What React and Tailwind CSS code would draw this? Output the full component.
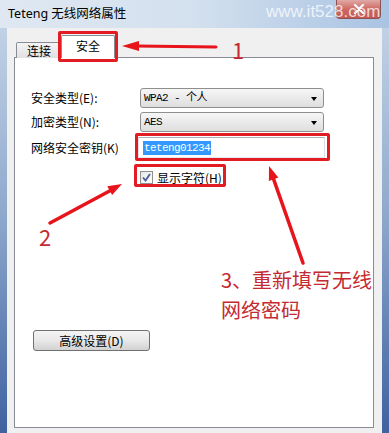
import React from "react";

const cjk = { fontFamily: '"Noto Sans CJK SC", "Noto Sans", sans-serif' };
const mono = { fontFamily: '"Liberation Mono", "Noto Sans CJK SC", monospace' };

function Select({ children }) {
  return (
    <div className="relative flex h-[20px] w-[184px] items-center rounded-[3px] border border-[#8e8f8f] bg-gradient-to-b from-[#f6f6f6] to-[#dedede] pl-[3px]">
      <span className="text-[11px] tracking-[-0.6px] text-black" style={mono}>{children}</span>
      <span className="absolute right-[6px] top-[8px] h-0 w-0 border-l-[3.5px] border-r-[3.5px] border-t-[4px] border-l-transparent border-r-transparent border-t-black" />
    </div>
  );
}

export default function App() {
  return (
    <div className="relative h-[433px] w-[389px] overflow-hidden bg-gradient-to-b from-[#c9d8e9] via-[#8ea8cc] to-[#3f62a0]" style={cjk}>
      {/* title bar */}
      <div className="flex h-[28px] items-center bg-gradient-to-r from-[#dfe8f2] via-[#d3e0ee] to-[#a9c3e3] pl-[8px]">
        <span className="text-[12.5px] text-black" style={{ fontFamily: '"Noto Sans", "Noto Sans CJK SC", sans-serif' }}>Teteng 无线网络属性</span>
      </div>
      {/* close button */}
      <div className="absolute left-[336px] top-0 flex h-[19px] w-[45px] items-center justify-center rounded-b-[4px] border border-t-0 border-[#8a3c3c] bg-gradient-to-b from-[#e8a49c] via-[#d5584c] to-[#c8463c] opacity-85">
        <svg width="12" height="10" viewBox="0 0 12 10">
          <path d="M2 1 L10 9 M10 1 L2 9" stroke="#fff" strokeWidth="2.4" strokeLinecap="round" />
        </svg>
      </div>
      {/* watermark */}
      <div className="absolute left-[266px] top-[1px] z-20 text-[17px] leading-[22px] text-white/75" style={{ fontFamily: '"Liberation Sans", Arial, sans-serif' }}>www.it528.com</div>

      {/* client area */}
      <div className="mx-[7px] flex h-[405px] flex-col bg-[#f0f0f0] pt-[7px]">
        {/* tabs */}
        <div className="relative z-10 -mb-px flex items-end pl-[9px]">
          <div className="flex h-[16px] w-[46px] items-center justify-center rounded-t-[2px] border border-b-0 border-[#898c95] bg-gradient-to-b from-[#f4f4f4] to-[#e1e1e1] text-[12px] leading-none text-black">连接</div>
          <div className="-ml-px flex h-[23px] w-[54px] items-start justify-center rounded-t-[2px] border border-b-0 border-[#898c95] bg-white pt-[3px] text-[12px] leading-[14px] text-black">安全</div>
        </div>
        {/* panel */}
        <div className="ml-[7px] mr-[8px] flex h-[371px] flex-col border border-[#898c95] bg-white pl-[16px] pt-[30px]">
          <div className="flex h-[20px] items-center">
            <span className="w-[109px] text-[12px] text-black">安全类型(E):</span>
            <Select>WPA2 - 个人</Select>
          </div>
          <div className="mt-[4px] flex h-[20px] items-center">
            <span className="w-[109px] text-[12px] text-black">加密类型(N):</span>
            <Select>AES</Select>
          </div>
          <div className="mt-[5px] flex h-[21px] items-center">
            <span className="w-[107px] text-[12px] text-black">网络安全密钥(K)</span>
            <div className="flex h-[21px] w-[187px] items-center border border-[#abadb3] border-b-[#e3e9ef] border-l-[#e2e3ea] border-r-[#dbdfe6] bg-white pl-[4px]">
              <span className="bg-[#3399ff] px-px text-[11px] leading-[14px] tracking-[-0.6px] text-white" style={mono}>teteng01234</span>
            </div>
          </div>
          <div className="mt-[12px] flex h-[15px] items-center pl-[109px]">
            <div className="flex h-[13px] w-[13px] items-center justify-center border border-[#8f8f8f] bg-gradient-to-br from-[#e6e6e6] to-[#ffffff]">
              <svg width="9" height="9" viewBox="0 0 9 9">
                <path d="M1 4.5 L3.5 7.5 L8 1" fill="none" stroke="#4a5f97" strokeWidth="1.8" />
              </svg>
            </div>
            <span className="ml-[4px] text-[12px] text-black">显示字符(H)</span>
          </div>
          <div className="ml-[2px] mt-[145px] flex h-[21px] w-[117px] items-center justify-center rounded-[3px] border border-[#707070] bg-gradient-to-b from-[#f4f4f4] via-[#e8e8e8] to-[#d2d2d2] text-[12px] text-black">
            高级设置(D)
          </div>
        </div>
      </div>

      {/* annotations */}
      <div className="absolute left-[58px] top-[31px] z-20 h-[31px] w-[60px] rounded-[2px] border-[3px] border-[#e31b23]" />
      <div className="absolute left-[135px] top-[133px] h-[28px] w-[195px] rounded-[2px] border-[3px] border-[#e31b23]" />
      <div className="absolute left-[134px] top-[164px] h-[23px] w-[92px] rounded-[2px] border-[3px] border-[#e31b23]" />

      <svg className="absolute left-0 top-0" width="389" height="433" viewBox="0 0 389 433">
        <line x1="216" y1="47" x2="136" y2="46" stroke="#e8141c" strokeWidth="3" strokeLinecap="round" />
        <polygon points="122,46 139,41 139,51" fill="#e8141c" />
        <line x1="50" y1="223" x2="110" y2="190.7" stroke="#e8141c" strokeWidth="3.5" strokeLinecap="round" />
        <polygon points="122,184 112.1,195.1 107.3,186.3" fill="#e8141c" />
        <line x1="303" y1="263" x2="273.6" y2="179.2" stroke="#e8141c" strokeWidth="3.5" strokeLinecap="round" />
        <polygon points="269,166 278.3,177.6 268.9,180.9" fill="#e8141c" />
      </svg>

      <div className="absolute left-[232px] top-[36px] text-[22px] leading-[26px] text-[#c52a32]">1</div>
      <div className="absolute left-[39px] top-[223px] text-[22px] leading-[26px] text-[#c52a32]">2</div>
      <div className="absolute left-[221px] top-[265px] text-[20px] leading-[30px] text-[#c52a32]">
        <div>3、重新填写无线</div>
        <div>网络密码</div>
      </div>
    </div>
  );
}
